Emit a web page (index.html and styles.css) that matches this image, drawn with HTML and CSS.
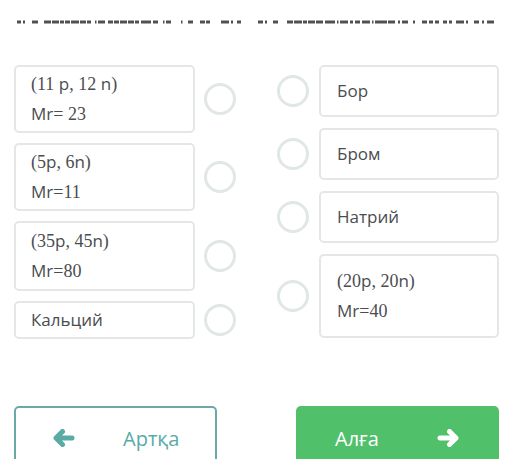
FILE: index.html
```html
<!DOCTYPE html>
<html lang="kk">
<head>
<meta charset="utf-8">
<link rel="stylesheet" href="styles.css">
</head>
<body>
<div class="page">
  <div class="cut">
    <svg class="cut-svg" width="527" height="6" viewBox="0 0 527 6">
      <path d="M17 3h4M23 3h2M32 3h6M44 3h7M52 3h7M60 3h4M65 3h5M71 3h8M80 3h6M87 3h4M95 3h1.5M98 3h7M108 3h5M114 3h5M120 3h7M128 3h6M135 3h4M141 3h10M153 3h5M163 3h1.5M166 3h5M181 3h1.5M188 3h5M200 3h5M206 3h4M221 3h8M231 3h2M237 3h4M258 3h5M265 3h2M273 3h5M287 3h6M294 3h8M303 3h4M308 3h7M316 3h7M325 3h10M337 3h1.5M340 3h8M350 3h3M355 3h5M362 3h8M372 3h1.5M375 3h12M388 3h7M398 3h2M402 3h6M413 3h2M422 3h5M429 3h4M435 3h4M443 3h4M449 3h3M456 3h8M466 3h2M474 3h5M482 3h2M487 3h7"
            stroke="#4f5254" stroke-width="3" fill="none"/>
    </svg>
  </div>

  <div class="match">
    <div class="col col-left">
      <div class="row">
        <div class="box two"><span class="m">(11 </span>p<span class="m">, 12 </span>n<span class="m">)</span><br>Mr<span class="m">= 23</span></div>
        <span class="radio"></span>
      </div>
      <div class="row">
        <div class="box two"><span class="m">(5</span>p<span class="m">, 6</span>n<span class="m">)</span><br>Mr<span class="m">=11</span></div>
        <span class="radio"></span>
      </div>
      <div class="row">
        <div class="box two tall"><span class="m">(35</span>p<span class="m">, 45</span>n<span class="m">)</span><br>Mr<span class="m">=80</span></div>
        <span class="radio"></span>
      </div>
      <div class="row">
        <div class="box one">Кальций</div>
        <span class="radio"></span>
      </div>
    </div>

    <div class="col col-right">
      <div class="row">
        <span class="radio"></span>
        <div class="box rbox">Бор</div>
      </div>
      <div class="row">
        <span class="radio"></span>
        <div class="box rbox">Бром</div>
      </div>
      <div class="row">
        <span class="radio"></span>
        <div class="box rbox">Натрий</div>
      </div>
      <div class="row">
        <span class="radio"></span>
        <div class="box rbox tall"><span class="m">(20</span>p<span class="m">, 20</span>n<span class="m">)</span><br>Mr<span class="m">=40</span></div>
      </div>
    </div>
  </div>

  <div class="nav">
    <button class="btn btn-back">
      <svg class="arrow" width="22" height="18" viewBox="0 0 22 18"><path d="M9.5 2.5 L3 9 L9.5 15.5 M4 9 H19" stroke="currentColor" stroke-width="5" stroke-linecap="round" stroke-linejoin="round" fill="none"/></svg>
      <span class="btn-text">Артқа</span>
    </button>
    <button class="btn btn-next">
      <span class="btn-text">Алға</span>
      <svg class="arrow" width="22" height="18" viewBox="0 0 22 18"><path d="M12.5 2.5 L19 9 L12.5 15.5 M18 9 H3" stroke="currentColor" stroke-width="5" stroke-linecap="round" stroke-linejoin="round" fill="none"/></svg>
    </button>
  </div>
</div>
</body>
</html>
```

FILE: styles.css
```css
html, body {
  margin: 0;
  padding: 0;
  background: #ffffff;
}

body {
  width: 527px;
  height: 459px;
  overflow: hidden;
  font-family: "Open Sans", "Noto Sans", sans-serif;
  color: #4a4d50;
}

.page {
  padding: 0 28px 0 14px;
}

.cut {
  box-sizing: border-box;
  height: 65px;
  padding-top: 19px;
  margin: 0 -28px 0 -14px;
}

.cut-svg {
  display: block;
}

.match {
  display: flex;
  justify-content: space-between;
}

.col {
  display: flex;
  flex-direction: column;
}

.col-left {
  gap: 10px;
}

.col-right {
  gap: 11px;
}

.row {
  display: flex;
  align-items: center;
}

.col-left .row {
  gap: 9px;
}

.col-right .row {
  gap: 10px;
}

.box {
  box-sizing: border-box;
  border: 2px solid #e4e6e7;
  border-radius: 5px;
  background: #fff;
  font-size: 17px;
  line-height: 30px;
  padding: 2px 15px;
}

.box.two.tall {
  padding: 3px 15px;
}

.col-left .box {
  width: 181px;
}

.rbox {
  width: 180px;
  padding: 9px 16px;
}

.rbox.tall {
  padding: 10px 16px;
}

.m {
  font-family: "Liberation Serif", "DejaVu Serif", serif;
  font-size: 18px;
}

.radio {
  box-sizing: border-box;
  width: 32px;
  height: 32px;
  border: 3px solid #e1e6e6;
  border-radius: 50%;
  flex: none;
}

.nav {
  display: flex;
  justify-content: space-between;
  margin-top: 67px;
}

.btn {
  box-sizing: border-box;
  width: 203px;
  height: 64px;
  border-radius: 5px;
  display: flex;
  align-items: center;
  font-family: "Open Sans", "Noto Sans", sans-serif;
  font-size: 20px;
  padding: 0;
  cursor: pointer;
}

.btn-back {
  background: #ffffff;
  border: 2px solid #6aa9a8;
  color: #5aaaa6;
  padding-left: 37px;
}

.btn-back .btn-text {
  margin-left: 48px;
}

.btn-next {
  background: #50c06b;
  border: none;
  color: #ffffff;
  padding-left: 39px;
}

.btn-next .btn-text {
  margin-right: 58px;
}

.arrow {
  display: block;
  flex: none;
}
```
